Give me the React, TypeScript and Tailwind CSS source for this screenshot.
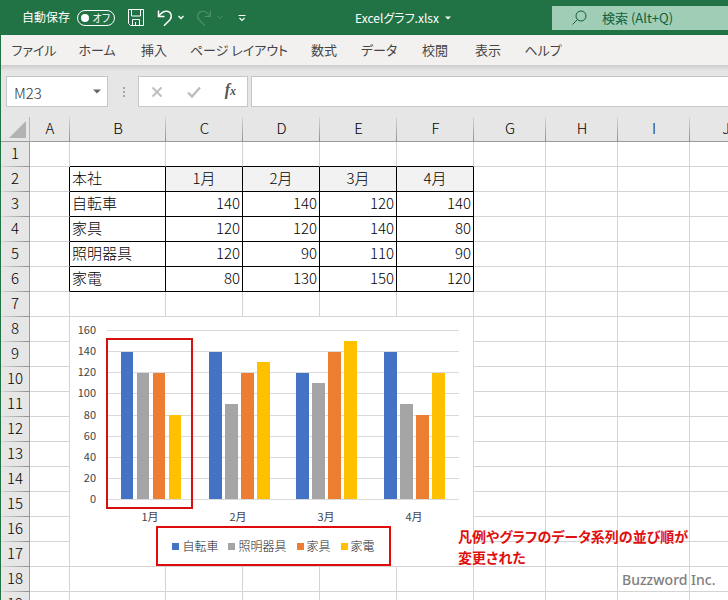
import React from "react";

const tabs = [
  { label: "ファイル", width: "w-[66px]" },
  { label: "ホーム", width: "w-[60px]" },
  { label: "挿入", width: "w-[54px]" },
  { label: "ページ レイアウト", width: "w-[116px]" },
  { label: "数式", width: "w-[54px]" },
  { label: "データ", width: "w-[56px]" },
  { label: "校閲", width: "w-[56px]" },
  { label: "表示", width: "w-[50px]" },
  { label: "ヘルプ", width: "w-[60px]" },
];

const columns = [
  { name: "A", width: "w-[40px]" },
  { name: "B", width: "w-[96px]" },
  { name: "C", width: "w-[77px]" },
  { name: "D", width: "w-[77px]" },
  { name: "E", width: "w-[77px]" },
  { name: "F", width: "w-[77px]" },
  { name: "G", width: "w-[72px]" },
  { name: "H", width: "w-[72px]" },
  { name: "I", width: "w-[72px]" },
  { name: "J", width: "w-[72px]" },
];

const months = ["1月", "2月", "3月", "4月"];

const sheet: Record<number, (string | number)[]> = {
  2: ["本社", ...months],
  3: ["自転車", 140, 140, 120, 140],
  4: ["家具", 120, 120, 140, 80],
  5: ["照明器具", 120, 90, 110, 90],
  6: ["家電", 80, 130, 150, 120],
};

const series = [
  { name: "自転車", fill: "fill-[#4472c4]", swatch: "bg-[#4472c4]", values: [140, 140, 120, 140] },
  { name: "照明器具", fill: "fill-[#a5a5a5]", swatch: "bg-[#a5a5a5]", values: [120, 90, 110, 90] },
  { name: "家具", fill: "fill-[#ed7d31]", swatch: "bg-[#ed7d31]", values: [120, 120, 140, 80] },
  { name: "家電", fill: "fill-[#ffc000]", swatch: "bg-[#ffc000]", values: [80, 130, 150, 120] },
];

const rows = Array.from({ length: 19 }, (_, i) => i + 1);

function TitleBar() {
  return (
    <header className="flex h-[35px] shrink-0 items-center bg-[#217346] text-white">
      <label htmlFor="autosave" className="ml-[22px] pb-0.5 text-[12px]">自動保存</label>
      <button id="autosave" role="switch" aria-checked="false" className="ml-[7px] flex h-4 w-[38px] items-center justify-between rounded-full border border-white pr-1 pl-[3px] text-[10px] leading-none">
        <span className="size-2 rounded-full bg-white" />
        <span>オフ</span>
      </button>
      <button aria-label="上書き保存" className="ml-[13px]">
        <svg viewBox="0 0 16 17" className="h-[17px] w-4 fill-none stroke-white">
          <path d="M.5 .5h15v16h-13l-2-2zM3.500 .5v6.500h9v-6.500M4.500 16v-5.500h7v5.500M7.500 16v-3" />
        </svg>
      </button>
      <button aria-label="元に戻す" className="ml-[13px]">
        <svg viewBox="0 0 16 18" className="h-[18px] w-4 fill-none stroke-white [stroke-width:1.5]">
          <path d="M1.500 1.500v6h6M1.800 7.200C4 4 7 2 10 2.300c4.500.5 5.500 5.500 2.800 8.700L7 16.800" />
        </svg>
      </button>
      <button aria-label="元に戻すの履歴" className="ml-[4px]">
        <svg viewBox="0 0 8 5" className="h-[5px] w-2 fill-none stroke-white [stroke-width:1.3]"><path d="M1.500 1L4 3.500 6.500 1" /></svg>
      </button>
      <button aria-label="やり直し" className="ml-[11px]" disabled>
        <svg viewBox="0 0 16 18" className="h-[18px] w-4 fill-none stroke-[#4b9069] [stroke-width:1.2]">
          <path d="M14.500 1.500v6h-6M14.200 7.200C12 4 9 2 6 2.300 1.500 2.800.5 7.800 3.200 11L9 16.800" />
        </svg>
      </button>
      <button aria-label="やり直しの履歴" className="ml-[4px]" disabled>
        <svg viewBox="0 0 8 5" className="h-[5px] w-2 fill-none stroke-[#4b9069]"><path d="M1.500 1L4 3.500 6.500 1" /></svg>
      </button>
      <button aria-label="クイック アクセス ツール バーのカスタマイズ" className="ml-[14px]">
        <svg viewBox="0 0 8 8" className="h-2 w-2 fill-none stroke-white [stroke-width:1.2]"><path d="M.5 1.500h7M1.500 4L4 6.500 6.500 4" /></svg>
      </button>
      <button className="mx-auto flex items-center gap-1.5 pl-2 text-[12px] whitespace-nowrap">
        <span>Excelグラフ.xlsx</span>
        <svg viewBox="0 0 6 4" className="h-1 w-1.5 fill-white"><path d="M0 .5h6L3 3.500z" /></svg>
      </button>
      <label className="flex h-6 w-[176px] items-center bg-[#a0cdb5] pl-5 text-[#10603a]">
        <svg viewBox="0 0 15 15" className="size-[15px] fill-none stroke-[#10603a]" aria-label="検索">
          <circle cx="9" cy="6" r="5" /><path d="M5.500 9.500L.5 14.500" />
        </svg>
        <input aria-label="検索" placeholder="検索 (Alt+Q)" className="ml-[15px] w-0 min-w-0 flex-1 bg-transparent text-[13px] outline-none placeholder:text-[#10603a]" />
      </label>
    </header>
  );
}

function FormulaBar() {
  return (
    <div className="flex h-[52px] shrink-0 items-start bg-[#e6e6e6] bg-[linear-gradient(#cfcdcc,#e6e6e6)] bg-[length:100%_6px] bg-no-repeat pt-[11px] pl-[5px]">
      <label className="flex h-[31px] w-[102px] items-center border border-[#c6c6c6] bg-white pr-[6px] pl-[7px]">
        <input aria-label="名前ボックス" defaultValue="M23" className="w-0 min-w-0 flex-1 pt-1 text-[15px] font-light text-[#333] outline-none" />
        <svg viewBox="0 0 8 5" className="h-[5px] w-2 fill-[#666]"><path d="M0 .5h8L4 4.500z" /></svg>
      </label>
      <div className="ml-[14px] flex h-[31px] w-[3px] flex-col items-center justify-center gap-[2px]">
        <span className="size-[2px] bg-[#a8a8a8]" />
        <span className="size-[2px] bg-[#a8a8a8]" />
        <span className="size-[2px] bg-[#a8a8a8]" />
      </div>
      <div className="ml-[13px] flex h-[31px] w-[110px] items-center justify-between border border-[#c6c6c6] bg-white pr-[11px] pl-3">
        <button aria-label="キャンセル"><svg viewBox="0 0 12 12" className="size-3 fill-none stroke-[#bdbdbd] [stroke-width:1.800]"><path d="M1.500 1.500l9 9M10.500 1.500l-9 9" /></svg></button>
        <button aria-label="入力"><svg viewBox="0 0 14 12" className="h-3 w-3.5 fill-none stroke-[#bdbdbd] [stroke-width:2.400]"><path d="M1 6.500l4 4 8-9" /></svg></button>
        <button aria-label="関数の挿入" className="pb-1 font-['Liberation_Serif',serif] text-[16px] leading-none font-bold text-[#555] italic">f<span className="text-[12px]">x</span></button>
      </div>
      <input aria-label="数式バー" className="ml-[3px] h-[31px] min-w-0 flex-1 border border-r-0 border-[#c6c6c6] bg-white px-2 text-[15px] outline-none" />
    </div>
  );
}

function cellClass(row: number, col: number) {
  const inTable = row >= 2 && row <= 6 && col >= 1 && col <= 5;
  const rightBlack = inTable || (row >= 2 && row <= 6 && col === 0);
  const bottomBlack = inTable || (row === 1 && col >= 1 && col <= 5);
  return [
    "h-[25px] border-r border-b p-0 px-[2px] pb-[2px] leading-5",
    rightBlack ? "border-r-black" : "border-r-[#d4d4d4]",
    bottomBlack ? "border-b-black" : "border-b-[#d4d4d4]",
    row === 2 && inTable && col > 1 ? "bg-[#f2f2f2] text-center" : "",
    row > 2 && inTable && col > 1 ? "text-right" : "",
  ].join(" ");
}

function Grid() {
  return (
    <table className="w-[761px] table-fixed border-separate border-spacing-0 text-[15px] font-light text-black">
      <thead>
        <tr>
          <th className="h-[25px] w-[29px] border-r border-b border-r-[#b5b5b5] border-b-[#9b9b9b] bg-[#e6e6e6] p-0" aria-label="すべて選択">
            <svg viewBox="0 0 17 17" className="ml-2 size-[17px] fill-[#b2b2b2]"><path d="M17 0v17H0z" /></svg>
          </th>
          {columns.map((c) => (
            <th key={c.name} scope="col" className={`${c.width} h-[25px] border-b border-[#9b9b9b] bg-[#e6e6e6] bg-[linear-gradient(#d6d6d6,#8f8f8f)] bg-[length:1px_100%] bg-right bg-no-repeat p-0 pb-[2px] leading-5 font-light text-black`}>
              {c.name}
            </th>
          ))}
        </tr>
      </thead>
      <tbody>
        {rows.map((r) => (
          <tr key={r}>
            <th scope="row" className="h-[25px] border-r border-[#9b9b9b] bg-[#e6e6e6] bg-[linear-gradient(to_right,#d6d6d6,#8f8f8f)] bg-[length:100%_1px] bg-bottom bg-no-repeat p-0 pb-[3px] leading-5 font-light text-black">
              {r}
            </th>
            {columns.map((c, i) => (
              <td key={c.name} className={cellClass(r, i)}>{i >= 1 ? sheet[r]?.[i - 1] : null}</td>
            ))}
          </tr>
        ))}
      </tbody>
    </table>
  );
}

/* One axis step of 20 spans 21 pixels. */
const lineY = (v: number) => Math.round(182 - v * 1.056);
const barTop = (v: number) => Math.floor(183 - v * 1.056);

function Chart() {
  return (
    <figure className="absolute top-[200px] left-[69px] flex h-[249px] w-[403px] flex-col bg-white" aria-label="月別売上グラフ">
      <svg viewBox="0 0 403 214" className="h-[214px] w-[403px] text-[11px]">
        {[0, 20, 40, 60, 80, 100, 120, 140, 160].map((v) => (
          <g key={v}>
            <rect x="37" y={lineY(v)} width="352" height="1" className="fill-[#d9d9d9]" />
            <text x="26" y={lineY(v) + 4} textAnchor="end" className="fill-[#444]">{v}</text>
          </g>
        ))}
        {months.map((m, g) => (
          <g key={m}>
            {series.map((s, i) => (
              <rect key={s.name} x={51 + g * 88 - (g > 1 ? 1 : 0) + i * 16} y={barTop(s.values[g])} width={g ? 13 : 12} height={182 - barTop(s.values[g])} className={s.fill} />
            ))}
            <text x={80 + g * 88} y="204" textAnchor="middle" className="fill-[#444]">{m}</text>
          </g>
        ))}
      </svg>
      <figcaption className="flex h-[30px] items-center justify-center gap-[10px] pl-1 text-[12px] font-light text-[#222]">
        {series.map((s) => (
          <span key={s.name} className="flex items-center gap-[3px] whitespace-nowrap">
            <span className={`size-[7px] ${s.swatch}`} />
            {s.name}
          </span>
        ))}
      </figcaption>
    </figure>
  );
}

export default function App() {
  return (
    <div className="flex h-screen flex-col overflow-hidden bg-white font-['Noto_Sans_CJK_JP','Noto_Sans',sans-serif] [font-feature-settings:'palt']">
      <TitleBar />
      <div className="flex min-h-0 flex-1 flex-col border-l border-[#217346]">
        <nav className="flex h-[30px] shrink-0 items-center bg-[#f3f1f0] text-[13px] text-[#444]">
          {tabs.map((t) => (
            <button key={t.label} className={`${t.width} shrink-0 text-center whitespace-nowrap`}>{t.label}</button>
          ))}
        </nav>
        <FormulaBar />
        <main className="relative min-h-0 flex-1 overflow-hidden">
          <Grid />
          <Chart />
          <div className="absolute top-[221px] left-[105px] h-[171px] w-[87px] border-2 border-[#d60f0f]" />
          <div className="absolute top-[409px] left-[155px] h-[40px] w-[235px] border-2 border-[#e00b0b]" />
          <p className="absolute top-[409px] left-[457px] text-[14px] leading-[21px] font-bold whitespace-nowrap text-[#e01010]">
            凡例やグラフのデータ系列の並び順が<br />変更された
          </p>
          <p className="absolute top-[453px] left-[621px] font-['Noto_Sans',sans-serif] text-[14px] leading-5 font-medium whitespace-nowrap text-[#808080]">Buzzword Inc.</p>
        </main>
      </div>
    </div>
  );
}
